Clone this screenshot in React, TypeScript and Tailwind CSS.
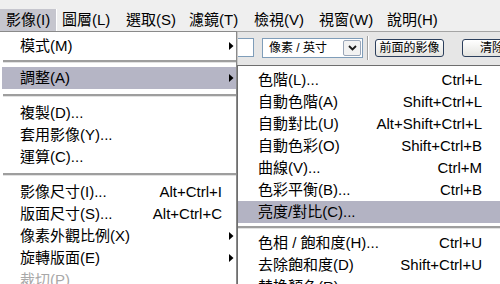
import React from "react";

type Row =
  | { kind: "item"; label: string; keys?: string; sub?: boolean; on?: boolean; off?: boolean }
  | { kind: "sep"; h: number; top: number };

const menuBar = [
  { label: "影像(I)", w: 62, open: true },
  { label: "圖層(L)", w: 64 },
  { label: "選取(S)", w: 63 },
  { label: "濾鏡(T)", w: 65 },
  { label: "檢視(V)", w: 65 },
  { label: "視窗(W)", w: 68 },
  { label: "說明(H)", w: 60 },
];

const imageMenu: Row[] = [
  { kind: "item", label: "模式(M)", sub: true },
  { kind: "sep", h: 10, top: 3 },
  { kind: "item", label: "調整(A)", sub: true, on: true },
  { kind: "sep", h: 13, top: 5 },
  { kind: "item", label: "複製(D)..." },
  { kind: "item", label: "套用影像(Y)..." },
  { kind: "item", label: "運算(C)..." },
  { kind: "sep", h: 13, top: 5 },
  { kind: "item", label: "影像尺寸(I)...", keys: "Alt+Ctrl+I" },
  { kind: "item", label: "版面尺寸(S)...", keys: "Alt+Ctrl+C" },
  { kind: "item", label: "像素外觀比例(X)", sub: true },
  { kind: "item", label: "旋轉版面(E)", sub: true },
  { kind: "item", label: "裁切(P)", off: true },
];

const adjustMenu: Row[] = [
  { kind: "item", label: "色階(L)...", keys: "Ctrl+L" },
  { kind: "item", label: "自動色階(A)", keys: "Shift+Ctrl+L" },
  { kind: "item", label: "自動對比(U)", keys: "Alt+Shift+Ctrl+L" },
  { kind: "item", label: "自動色彩(O)", keys: "Shift+Ctrl+B" },
  { kind: "item", label: "曲線(V)...", keys: "Ctrl+M" },
  { kind: "item", label: "色彩平衡(B)...", keys: "Ctrl+B" },
  { kind: "item", label: "亮度/對比(C)...", on: true },
  { kind: "sep", h: 9, top: 3 },
  { kind: "item", label: "色相 / 飽和度(H)...", keys: "Ctrl+U" },
  { kind: "item", label: "去除飽和度(D)", keys: "Shift+Ctrl+U" },
  { kind: "item", label: "替換顏色(R)..." },
];

const Arrow = () => (
  <svg width="5" height="8" viewBox="0 0 5 8">
    <path d="M0 0L4.5 4L0 8Z" fill="#000" />
  </svg>
);

const Separator = ({ h, top }: { h: number; top: number }) => (
  <div className="ml-[3px]" style={{ height: h, paddingTop: top }}>
    <div className="h-[2px] bg-[#9e9e9e]" />
    <div className="h-px bg-[#e2e2e2]" />
  </div>
);

const ImageMenu = () => (
  <div className="absolute left-0 top-[31px] w-[237px] h-[270px] bg-white border-t border-r border-[#8a8a8a] pt-[3px] shadow-[1px_1px_0_#c8c8c8]">
    {imageMenu.map((r, i) =>
      r.kind === "sep" ? (
        <Separator key={i} h={r.h} top={r.top} />
      ) : (
        <div
          key={i}
          className={`flex items-center h-[22px] leading-[22px] ml-[2px] pl-[18px] whitespace-nowrap ${r.on ? "bg-[#b5b5c5]" : ""} ${r.off ? "text-[#a8a8a8]" : "text-black"}`}
        >
          <span className="flex-1">{r.label}</span>
          {r.keys && <span>{r.keys}</span>}
          <span className="w-[14px] pl-[7px] flex items-center">{r.sub && <Arrow />}</span>
        </div>
      )
    )}
  </div>
);

const AdjustMenu = () => (
  <div className="absolute left-[237px] top-[65px] w-[268px] h-[230px] bg-white border-t border-l border-[#6e6e6e] pt-[3px]">
    {adjustMenu.map((r, i) =>
      r.kind === "sep" ? (
        <div key={i} style={{ height: r.h, paddingTop: r.top }}>
          <div className="h-[2px] bg-[#9e9e9e]" />
          <div className="h-px bg-[#e2e2e2]" />
        </div>
      ) : (
        <div
          key={i}
          className={`flex items-center h-[22px] leading-[22px] pl-[20px] pr-[23px] whitespace-nowrap text-black ${r.on ? "bg-[#b3b3c3]" : ""}`}
        >
          <span className="flex-1">{r.label}</span>
          {r.keys && <span>{r.keys}</span>}
        </div>
      )
    )}
  </div>
);

const Toolbar = () => (
  <div className="flex items-center h-[32px] bg-[#e6e6e6] border-t border-[#a4a4a4] text-[12px] whitespace-nowrap">
    <div className="shrink-0 ml-[180px] w-[74px] h-[19px] bg-white border border-[#7f9db9]" />
    <div className="shrink-0 ml-[8px] w-[101px] h-[20px] bg-white border border-[#7f9db9] flex items-center">
      <span className="flex-1 pl-[6px] leading-none">像素 / 英寸</span>
      <span className="w-[18px] h-[16px] mr-px border border-[#9aa6b8] rounded-[2px] bg-[#f2f2f2] flex items-center justify-center">
        <svg width="9" height="6" viewBox="0 0 9 6">
          <path d="M1 1L4.5 4.5L8 1" stroke="#1a1a1a" strokeWidth="1.8" fill="none" />
        </svg>
      </span>
    </div>
    <div className="shrink-0 ml-[4px] h-[24px] w-px bg-[#a0a0a0] border-r border-white box-content" />
    <div className="shrink-0 ml-[6px] w-[69px] h-[18px] rounded-[3px] border border-[#2c3f5c] bg-gradient-to-b from-white to-[#e4e4e0] flex items-center justify-center leading-none">
      前面的影像
    </div>
    <div className="shrink-0 ml-[18px] w-[90px] h-[18px] rounded-[3px] border border-[#2c3f5c] bg-gradient-to-b from-white to-[#e4e4e0] flex items-center pl-[17px] leading-none">
      清除影像
    </div>
  </div>
);

export default function App() {
  return (
    <div className="relative w-[500px] h-[284px] overflow-hidden bg-[#e6e6e6] font-['Liberation_Sans','Noto_Sans_CJK_TC',sans-serif] text-[15px] text-black">
      <div className="flex h-[31px] bg-[#efefef] pt-[9px] whitespace-nowrap">
        {menuBar.map((m) => (
          <div key={m.label} className="shrink-0" style={{ width: m.w }}>
            <div
              className={`h-[22px] leading-[22px] ${m.open ? "w-[57px] pl-[6px] bg-[#c6c6ce] border-r border-white" : ""}`}
            >
              {m.label}
            </div>
          </div>
        ))}
      </div>
      <Toolbar />
      <ImageMenu />
      <AdjustMenu />
    </div>
  );
}
